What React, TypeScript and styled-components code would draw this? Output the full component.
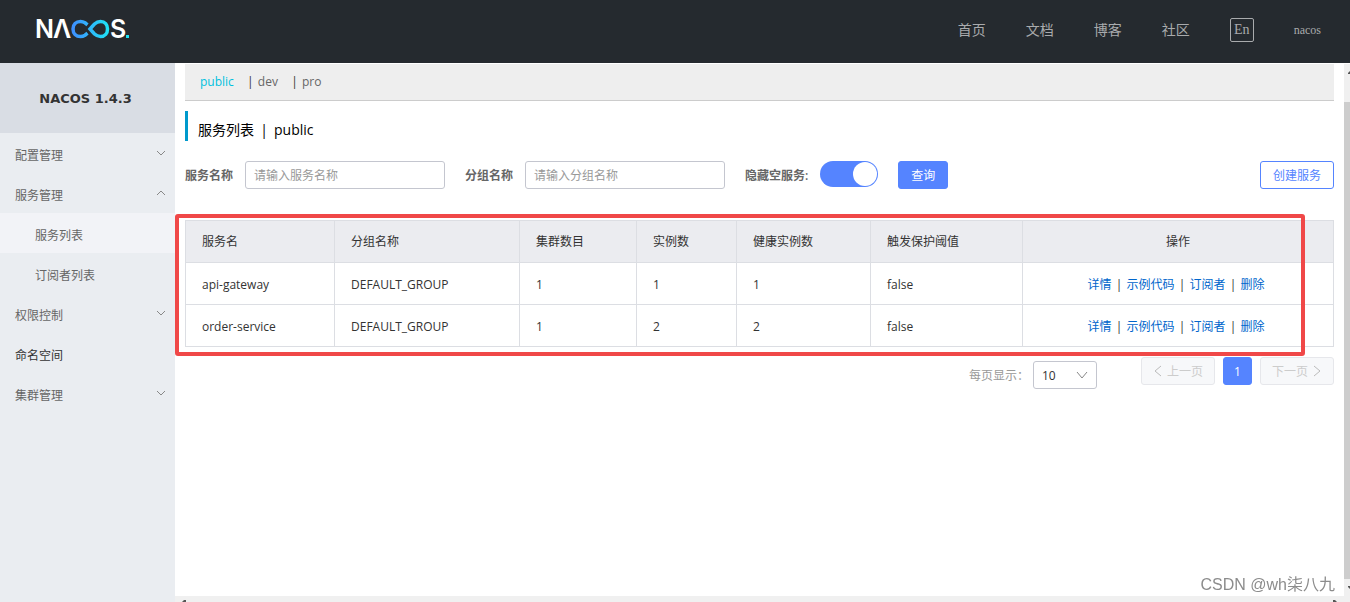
import React from 'react';
import styled, { createGlobalStyle } from 'styled-components';

const GlobalStyle = createGlobalStyle`
  * { box-sizing: border-box; }
  body {
    margin: 0;
    background: #fff;
    color: #333;
    font-family: "Open Sans", "Noto Sans CJK SC", sans-serif;
    font-size: 12px;
    line-height: 20px;
  }
  button, input, select { font: inherit; }
  a { text-decoration: none; }
`;

const Page = styled.div`
  display: flex;
  flex-direction: column;
  min-height: 100vh;
`;

const Header = styled.header`
  display: flex;
  align-items: center;
  justify-content: space-between;
  height: 63px;
  padding: 0 29px 4px 36px;
  background: #252a2f;
`;

const HeaderNav = styled.nav`
  display: flex;
  align-items: center;
  gap: 40px;
`;

const HeaderLink = styled.a`
  color: #a9abad;
  font-size: 14px;
`;

const LanguageButton = styled.button`
  width: 24px;
  height: 24px;
  padding: 0;
  border: 1px solid #a9abad;
  border-radius: 2px;
  background: none;
  color: #a9abad;
  font-family: "Liberation Serif", serif;
  font-size: 14px;
  line-height: 20px;
`;

const UserLink = styled.a`
  color: #a9abad;
  font-family: "Liberation Serif", serif;
  font-size: 12px;
`;

const Body = styled.div`
  display: flex;
  flex: 1;
`;

const Sidebar = styled.aside`
  flex: none;
  width: 175px;
  background: #eaedf1;
`;

const Product = styled.h1`
  margin: 0;
  padding: 2px 4px 0 0;
  background: #d9dde4;
  font-family: "DejaVu Sans", sans-serif;
  font-size: 13px;
  line-height: 68px;
  text-align: center;
`;

const MenuItem = styled.a<{ $nested?: boolean; $active?: boolean; $dark?: boolean }>`
  display: flex;
  align-items: center;
  justify-content: space-between;
  height: 40px;
  padding: 6px 9px 0 ${p => (p.$nested ? 35 : 15)}px;
  background: ${p => (p.$active ? '#f2f3f7' : 'transparent')};
  color: ${p => (p.$dark ? '#333' : '#666')};
`;

const MenuArrow = styled.svg`
  width: 10px;
  height: 10px;
  margin-bottom: 7px;
  fill: none;
  stroke: #888;
`;

const Scroller = styled.div`
  display: flex;
  flex: 1;
  min-width: 0;
`;

const Pane = styled.div`
  display: flex;
  flex: 1;
  flex-direction: column;
  min-width: 0;
`;

const Content = styled.main`
  flex: 1;
  padding: 1px 10px 0;
`;

const VerticalBar = styled.div`
  display: flex;
  flex-direction: column;
  flex: none;
  width: 6px;
  margin-top: 1px;
  background: #f0f0f0;
`;

const VerticalThumb = styled.div`
  flex: 1;
  background: #cdcdcd;
`;

const HorizontalBar = styled.div`
  display: flex;
  justify-content: space-between;
  height: 6px;
  padding: 0 6px;
  background: #f0f0f0;
`;

const ScrollArrow = styled.svg`
  display: block;
  flex: none;
  fill: #555;
`;

const Namespaces = styled.nav`
  display: flex;
  height: 37px;
  padding-left: 15px;
  border-bottom: 1px solid #ccc;
  background: #eee;
  line-height: 36px;
`;

const Namespace = styled.a<{ $active?: boolean }>`
  margin-right: 9px;
  color: ${p => (p.$active ? '#00c1de' : '#666')};
`;

const Bar = styled.span`
  display: inline-block;
  width: 15px;
  text-align: center;
`;

const Title = styled.h2`
  margin: 10px 0 20px;
  padding: 8px 0 0 10px;
  border-left: 3px solid #09c;
  color: #000;
  font-size: 14px;
  font-weight: 400;
  line-height: 22px;
`;

const TitleBar = styled(Bar)`
  width: 20px;
`;

const SearchForm = styled.form`
  display: flex;
  align-items: center;
  height: 28px;
`;

const Label = styled.label`
  margin-right: 12px;
  padding-top: 2px;
  color: #666;
  font-weight: 600;
`;

const TextInput = styled.input`
  width: 200px;
  height: 28px;
  margin-right: 20px;
  padding: 0 8px;
  border: 1px solid #c4c6cf;
  border-radius: 3px;
  &::placeholder { color: #999; }
`;

const Switch = styled.input`
  display: flex;
  justify-content: flex-end;
  width: 58px;
  height: 26px;
  margin: 0 20px 2px 0;
  padding: 1px;
  border-radius: 13px;
  background: #5584ff;
  appearance: none;
  &::before {
    content: "";
    width: 24px;
    height: 24px;
    border-radius: 50%;
    background: #fff;
  }
`;

const Button = styled.button<{ $outline?: boolean }>`
  height: 28px;
  padding: 2px 12px 0;
  border: 1px solid #5584ff;
  border-radius: 3px;
  background: ${p => (p.$outline ? '#fff' : '#5584ff')};
  color: ${p => (p.$outline ? '#5584ff' : '#fff')};
`;

const Spacer = styled.div`
  flex: 1;
`;

const TableArea = styled.section`
  position: relative;
  margin-top: 31px;
`;

const Highlight = styled.div`
  position: absolute;
  top: -6px;
  right: 29px;
  bottom: -9px;
  left: -10px;
  border: 4px solid #f04848;
  border-radius: 3px;
  pointer-events: none;
`;

const Table = styled.table`
  width: 100%;
  border-collapse: collapse;
  table-layout: fixed;
`;

const HeadCell = styled.th<{ $center?: boolean }>`
  height: 42px;
  padding: 0 16px;
  border: 1px solid #dcdee3;
  background: #ebecf0;
  font-weight: 400;
  text-align: ${p => (p.$center ? 'center' : 'left')};
`;

const Cell = styled.td<{ $center?: boolean }>`
  height: 42px;
  padding: 2px ${p => (p.$center ? 20 : 16)}px 0 16px;
  border: 1px solid #dcdee3;
  text-align: ${p => (p.$center ? 'center' : 'left')};
`;

const ActionLink = styled.a`
  color: #06c;
`;

const Footer = styled.footer`
  display: flex;
  justify-content: flex-end;
  margin-top: 10px;
`;

const PageSize = styled.label`
  display: flex;
  align-items: center;
  height: 28px;
  margin: 4px 44px 0 0;
  color: #999;
`;

const PageSizeText = styled.span`
  padding-top: 2px;
`;

const SelectBox = styled.span`
  position: relative;
  margin-left: 4px;
`;

const Select = styled.select`
  display: block;
  width: 64px;
  height: 28px;
  padding: 2px 8px 0;
  border: 1px solid #c4c6cf;
  border-radius: 3px;
  background: #fff;
  color: #333;
  appearance: none;
`;

const SelectArrow = styled.svg`
  position: absolute;
  top: 9px;
  right: 9px;
  width: 12px;
  height: 10px;
  fill: none;
  stroke: #888;
  pointer-events: none;
`;

const Pager = styled.nav`
  display: flex;
  gap: 8px;
`;

const PageButton = styled.button<{ $current?: boolean }>`
  display: flex;
  align-items: center;
  justify-content: center;
  gap: 4px;
  width: ${p => (p.$current ? 29 : 74)}px;
  height: 28px;
  padding: 2px 0 0;
  border: 1px solid ${p => (p.$current ? '#5584ff' : '#e6e7eb')};
  border-radius: 3px;
  background: ${p => (p.$current ? '#5584ff' : '#f7f8fa')};
  color: ${p => (p.$current ? '#fff' : '#ccc')};
`;

const PageArrow = styled.svg`
  width: 10px;
  height: 12px;
  margin-bottom: 2px;
  fill: none;
  stroke: #bbb;
`;

const Watermark = styled.div`
  position: fixed;
  right: 15px;
  bottom: 5px;
  color: #8c8c8c;
  font-family: "Liberation Sans", "Noto Sans CJK SC", sans-serif;
  font-size: 16px;
  line-height: 24px;
`;

const LogoMark = styled.svg`
  display: block;
  overflow: visible;
`;

const LogoText = styled.text`
  font-family: Inter, sans-serif;
  font-size: 25px;
  font-weight: 600;
`;

function Logo() {
  return (
    <LogoMark width="100" height="30" viewBox="0 0 100 30" role="img" aria-label="NACOS">
      <defs>
        <linearGradient id="loop" x1="35" x2="73" y1="0" y2="0" gradientUnits="userSpaceOnUse">
          <stop offset="0" stopColor="#3f8cff" />
          <stop offset="1" stopColor="#1ee3f5" />
        </linearGradient>
      </defs>
      <LogoText x="-1" y="23" fill="#fff">N</LogoText>
      <LogoText x="17" y="23" fill="#fff">Λ</LogoText>
      <LogoText x="74" y="23" fill="#fff">S</LogoText>
      <path
        d="M51.500 9.800 L49 7.800 C47.500 6.900 46 6.500 44.500 6.500 C40 6.500 37 9.500 37 14 C37 18.500 40 21.500 44.500 21.500 C46 21.500 47.500 21.100 49 20.200 L51.500 18.200 M54 14 L58.500 9 C60.500 7.200 62 6.500 64.500 6.500 C69 6.500 71.500 9.800 71.500 14 C71.500 18.200 69 21.500 64.500 21.500 C62 21.500 60.500 20.800 58.500 19 Z"
        fill="none"
        stroke="url(#loop)"
        strokeWidth="3.500"
      />
      <rect x="90" y="20" width="3" height="3" fill="#1ee3f5" />
    </LogoMark>
  );
}

const menu = [
  { text: '配置管理', arrow: 'down' },
  { text: '服务管理', arrow: 'up' },
  { text: '服务列表', nested: true, active: true },
  { text: '订阅者列表', nested: true },
  { text: '权限控制', arrow: 'down' },
  { text: '命名空间', dark: true },
  { text: '集群管理', arrow: 'down' },
];

const columns: { title: string; width?: number }[] = [
  { title: '服务名', width: 149 },
  { title: '分组名称', width: 185 },
  { title: '集群数目', width: 117 },
  { title: '实例数', width: 100 },
  { title: '健康实例数', width: 134 },
  { title: '触发保护阈值', width: 152 },
  { title: '操作' },
];

const services = [
  ['api-gateway', 'DEFAULT_GROUP', '1', '1', '1', 'false'],
  ['order-service', 'DEFAULT_GROUP', '1', '2', '2', 'false'],
];

const actions = ['详情', '示例代码', '订阅者', '删除'];

export default function App() {
  return (
    <Page>
      <GlobalStyle />
      <Header>
        <Logo />
        <HeaderNav>
          {['首页', '文档', '博客', '社区'].map(t => (
            <HeaderLink key={t} href="#">{t}</HeaderLink>
          ))}
          <LanguageButton type="button">En</LanguageButton>
          <UserLink href="#">nacos</UserLink>
        </HeaderNav>
      </Header>
      <Body>
        <Sidebar>
          <Product>NACOS 1.4.3</Product>
          <nav>
            {menu.map(m => (
              <MenuItem key={m.text} href="#" $nested={m.nested} $active={m.active} $dark={m.dark}>
                {m.text}
                {m.arrow && (
                  <MenuArrow viewBox="0 0 10 10">
                    <path d={m.arrow === 'down' ? 'M1 3 L5 7 L9 3' : 'M1 7 L5 3 L9 7'} />
                  </MenuArrow>
                )}
              </MenuItem>
            ))}
          </nav>
        </Sidebar>
        <Scroller>
          <Pane>
            <Content>
              <Namespaces>
                <Namespace href="#" $active>public</Namespace>
                <Bar>|</Bar>
                <Namespace href="#">dev</Namespace>
                <Bar>|</Bar>
                <Namespace href="#">pro</Namespace>
              </Namespaces>
              <Title>服务列表<TitleBar>|</TitleBar>public</Title>
              <SearchForm>
                <Label htmlFor="service">服务名称</Label>
                <TextInput id="service" placeholder="请输入服务名称" />
                <Label htmlFor="group">分组名称</Label>
                <TextInput id="group" placeholder="请输入分组名称" />
                <Label htmlFor="hide-empty">隐藏空服务:</Label>
                <Switch id="hide-empty" type="checkbox" role="switch" defaultChecked />
                <Button type="button">查询</Button>
                <Spacer />
                <Button type="button" $outline>创建服务</Button>
              </SearchForm>
              <TableArea>
                <Table>
                  <colgroup>
                    {columns.map(c => <col key={c.title} width={c.width} />)}
                  </colgroup>
                  <thead>
                    <tr>
                      {columns.map(c => (
                        <HeadCell key={c.title} $center={!c.width}>{c.title}</HeadCell>
                      ))}
                    </tr>
                  </thead>
                  <tbody>
                    {services.map(row => (
                      <tr key={row[0]}>
                        {row.map((value, i) => <Cell key={i}>{value}</Cell>)}
                        <Cell $center>
                          {actions.map((a, i) => (
                            <React.Fragment key={a}>
                              {i > 0 && <Bar>|</Bar>}
                              <ActionLink href="#">{a}</ActionLink>
                            </React.Fragment>
                          ))}
                        </Cell>
                      </tr>
                    ))}
                  </tbody>
                </Table>
                <Highlight />
              </TableArea>
              <Footer>
                <PageSize>
                  <PageSizeText>每页显示：</PageSizeText>
                  <SelectBox>
                    <Select defaultValue="10">
                      <option>10</option>
                      <option>20</option>
                      <option>50</option>
                    </Select>
                    <SelectArrow viewBox="0 0 12 10"><path d="M1 2 L6 8 L11 2" /></SelectArrow>
                  </SelectBox>
                </PageSize>
                <Pager>
                  <PageButton type="button">
                    <PageArrow viewBox="0 0 10 12"><path d="M8 1 L2 6 L8 11" /></PageArrow>
                    上一页
                  </PageButton>
                  <PageButton type="button" $current>1</PageButton>
                  <PageButton type="button">
                    下一页
                    <PageArrow viewBox="0 0 10 12"><path d="M2 1 L8 6 L2 11" /></PageArrow>
                  </PageButton>
                </Pager>
              </Footer>
            </Content>
            <HorizontalBar>
              <ScrollArrow width="6" height="6"><path d="M1 6 L3 4 H5 V6 Z" /></ScrollArrow>
              <ScrollArrow width="6" height="6"><path d="M1 4 H3 L5 6 H1 Z" /></ScrollArrow>
            </HorizontalBar>
          </Pane>
          <VerticalBar>
            <ScrollArrow width="6" height="38"><path d="M4 9 L6 7 V10 H4 Z" /></ScrollArrow>
            <VerticalThumb />
            <ScrollArrow width="6" height="23"><path d="M4 7 H6 V10 L4 8 Z" /></ScrollArrow>
          </VerticalBar>
        </Scroller>
      </Body>
      <Watermark>CSDN @wh柒八九</Watermark>
    </Page>
  );
}
